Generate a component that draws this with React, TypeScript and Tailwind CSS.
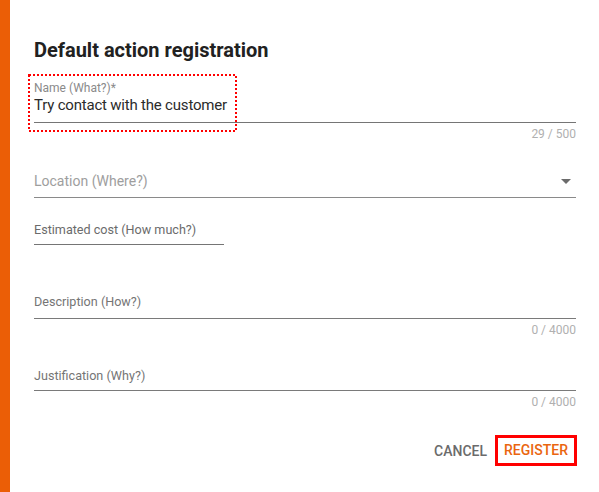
import React from 'react';

const font = { fontFamily: 'Roboto, "Liberation Sans", sans-serif' };

function Counter({ text }: { text: string }) {
  return <div className="mt-[4px] text-right text-[12px] leading-[14px] text-[#b0b0b0]">{text}</div>;
}

export default function App() {
  return (
    <div className="flex h-[492px] w-[599px] bg-white" style={font}>
      <div className="w-[10px] shrink-0 bg-[#eb5e06]" />
      <div className="flex flex-1 flex-col pl-[24px] pr-[23px] pt-[38px]">
        <h1 className="text-[20px] font-bold leading-[24px] text-[#212121]">Default action registration</h1>

        {/* name */}
        <div className="relative mt-[19px]">
          <div className="border-b border-[#757575] pb-[7px]">
            <div className="text-[12px] leading-[14px] text-[#8a8a8a]">Name (What?)*</div>
            <div className="text-[15px] leading-[20px] tracking-[-0.2px] text-[#2b2b2b]">Try contact with the customer</div>
          </div>
          <svg className="pointer-events-none absolute left-[-6px] top-[-7px]" width="209" height="58">
            <rect x="1" y="1" width="207" height="56" fill="none" stroke="#ff0000" strokeWidth="2" strokeDasharray="2 2" />
          </svg>
          <Counter text="29 / 500" />
        </div>

        {/* location */}
        <div className="mt-[32px] flex items-center justify-between border-b border-[#8a8a8a] pb-[8px]">
          <div className="text-[14px] leading-[16px] text-[#9e9e9e]">Location (Where?)</div>
          <svg width="10" height="5" viewBox="0 0 10 5" className="mr-[5px]">
            <path d="M0 0h10L5 5z" fill="#6b6b6b" />
          </svg>
        </div>

        {/* cost */}
        <div className="mt-[24px] w-[190px] border-b border-[#757575] pb-[7px]">
          <div className="text-[12.6px] leading-[15px] text-[#6b6b6b]">Estimated cost (How much?)</div>
        </div>

        {/* description */}
        <div className="mt-[49px]">
          <div className="border-b border-[#7a7a7a] pb-[9px]">
            <div className="text-[12.6px] leading-[15px] text-[#757575]">Description (How?)</div>
          </div>
          <Counter text="0 / 4000" />
        </div>

        {/* justification */}
        <div className="mt-[31px]">
          <div className="border-b border-[#7a7a7a] pb-[7px]">
            <div className="text-[12.6px] leading-[15px] text-[#757575]">Justification (Why?)</div>
          </div>
          <Counter text="0 / 4000" />
        </div>

        <div className="mr-[-1px] mt-[26px] flex items-center justify-end gap-[8px]">
          <button className="text-[14px] font-medium leading-[16px] text-[#6b6b6b]">CANCEL</button>
          <button className="flex h-[31px] items-center border-[3px] border-[#ff0000] px-[6px] text-[14px] font-medium text-[#ea650f]">
            REGISTER
          </button>
        </div>
      </div>
    </div>
  );
}
